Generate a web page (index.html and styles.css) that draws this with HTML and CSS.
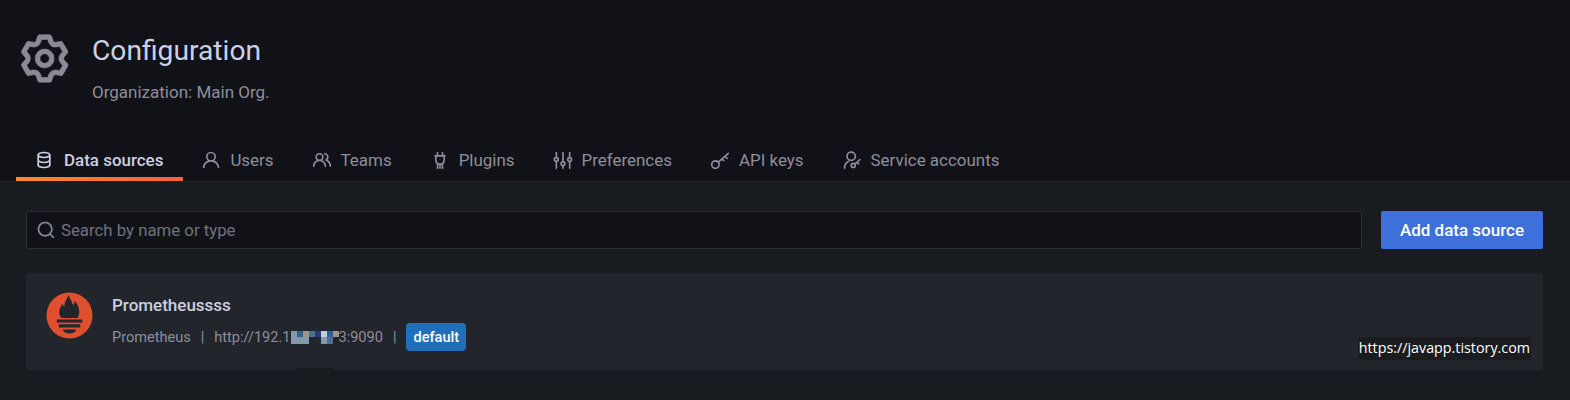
FILE: index.html
```html
<!DOCTYPE html>
<html lang="en">
<head>
<meta charset="utf-8">
<title>Configuration</title>
<link rel="stylesheet" href="styles.css">
</head>
<body>
<header class="page-header">
  <div class="title-row">
    <svg class="gear" viewBox="0 0 24 24"><path d="M19.9,12.66a1,1,0,0,1,0-1.32L21.18,9.9a1,1,0,0,0,.12-1.17l-2-3.46a1,1,0,0,0-1.07-.48l-1.88.38a1,1,0,0,1-1.15-.66l-.61-1.83A1,1,0,0,0,13.64,2h-4a1,1,0,0,0-1,.68L8.08,4.51a1,1,0,0,1-1.15.66L5,4.79A1,1,0,0,0,4,5.27L2,8.73A1,1,0,0,0,2.1,9.9l1.27,1.44a1,1,0,0,1,0,1.32L2.1,14.1A1,1,0,0,0,2,15.27l2,3.46a1,1,0,0,0,1.07.48l1.88-.38a1,1,0,0,1,1.15.66l.61,1.83a1,1,0,0,0,1,.68h4a1,1,0,0,0,.95-.68l.61-1.83a1,1,0,0,1,1.15-.66l1.88.38a1,1,0,0,0,1.07-.48l2-3.46a1,1,0,0,0-.12-1.17ZM18.41,14l.8.9-1.28,2.22-1.18-.24a3,3,0,0,0-3.45,2L12.92,20H10.36L10,18.86a3,3,0,0,0-3.45-2l-1.18.24L4.07,14.89l.8-.9a3,3,0,0,0,0-4l-.8-.9L5.35,6.89l1.18.24a3,3,0,0,0,3.45-2L10.36,4h2.56l.38,1.14a3,3,0,0,0,3.45,2l1.18-.24,1.28,2.22-.8.9A3,3,0,0,0,18.41,14ZM11.64,8a4,4,0,1,0,4,4A4,4,0,0,0,11.64,8Zm0,6a2,2,0,1,1,2-2A2,2,0,0,1,11.64,14Z"/></svg>
    <div class="title-text">
      <h1>Configuration</h1>
      <p>Organization: Main Org.</p>
    </div>
  </div>
  <nav class="tabs">
    <a class="tab active">
      <svg class="tab-icon" viewBox="0 0 24 24"><path d="M12,2C8,2,4,3.37,4,6V18c0,2.63,4,4,8,4s8-1.37,8-4V6C20,3.37,16,2,12,2Zm6,16c0,.71-2.28,2-6,2s-6-1.29-6-2V14.73A13.16,13.16,0,0,0,12,16a13.16,13.16,0,0,0,6-1.27Zm0-6c0,.71-2.28,2-6,2s-6-1.29-6-2V8.73A13.16,13.16,0,0,0,12,10a13.16,13.16,0,0,0,6-1.27ZM12,8C8.28,8,6,6.71,6,6s2.28-2,6-2,6,1.29,6,2S15.72,8,12,8Z"/></svg>
      <span>Data sources</span>
    </a>
    <a class="tab">
      <svg class="tab-icon" viewBox="0 0 24 24"><path d="M15.71,12.71a6,6,0,1,0-7.42,0,10,10,0,0,0-6.22,8.18,1,1,0,0,0,2,.22,8,8,0,0,1,15.9,0,1,1,0,0,0,1,.89h.11a1,1,0,0,0,.88-1.1A10,10,0,0,0,15.71,12.71ZM12,12a4,4,0,1,1,4-4A4,4,0,0,1,12,12Z"/></svg>
      <span>Users</span>
    </a>
    <a class="tab">
      <svg class="tab-icon" viewBox="0 0 24 24"><path d="M12.3,12.22A4.92,4.92,0,0,0,14,8.5a5,5,0,0,0-10,0,4.92,4.92,0,0,0,1.7,3.72A8,8,0,0,0,1,19.5a1,1,0,0,0,2,0,6,6,0,0,1,12,0,1,1,0,0,0,2,0A8,8,0,0,0,12.3,12.22ZM9,11.5a3,3,0,1,1,3-3A3,3,0,0,1,9,11.5Zm9.74.32A5,5,0,0,0,15,3.5a1,1,0,0,0,0,2,3,3,0,0,1,3,3,3,3,0,0,1-1.5,2.59,1,1,0,0,0-.5.84,1,1,0,0,0,.45.86l.39.26.13.07a7,7,0,0,1,4,6.38,1,1,0,0,0,2,0A9,9,0,0,0,18.74,11.82Z"/></svg>
      <span>Teams</span>
    </a>
    <a class="tab">
      <svg class="tab-icon line" viewBox="0 0 24 24"><path d="M9 3v4M15 3v4M6 7h12M7 7v5c0 3 2 5 5 5s5-2 5-5V7M12 17v5M9 22v-4M15 22v-4"/></svg>
      <span>Plugins</span>
    </a>
    <a class="tab">
      <svg class="tab-icon line" viewBox="0 0 24 24"><path d="M4 3v6M4 14v8M12 3v11M12 19v3M20 3v6M20 14v8"/><circle cx="4" cy="11.500" r="2.300"/><circle cx="12" cy="16.500" r="2.300"/><circle cx="20" cy="11.500" r="2.300"/></svg>
      <span>Preferences</span>
    </a>
    <a class="tab">
      <svg class="tab-icon line" viewBox="0 0 24 24"><circle cx="6.500" cy="17.500" r="4.500"/><path d="M10 14.500L22 4M18 7.500l2.500 2.500M14.500 10.700l2 2"/></svg>
      <span>API keys</span>
    </a>
    <a class="tab">
      <svg class="tab-icon line" viewBox="0 0 24 24"><circle cx="11" cy="7.500" r="5"/><path d="M3 22c0-4 2-7 5-8.500"/><circle cx="13.500" cy="18.500" r="2.400"/><path d="M15.500 17L21.500 11.500M18 14.700l2 2"/></svg>
      <span>Service accounts</span>
    </a>
  </nav>
</header>
<main class="content">
  <div class="toolbar">
    <div class="search">
      <svg class="search-icon" viewBox="0 0 24 24"><path d="M21.71,20.29,18,16.61A9,9,0,1,0,16.61,18l3.68,3.68a1,1,0,0,0,1.42,0A1,1,0,0,0,21.71,20.29ZM11,18a7,7,0,1,1,7-7A7,7,0,0,1,11,18Z"/></svg>
      <span>Search by name or type</span>
    </div>
    <button class="add-button">Add data source</button>
  </div>
  <section class="card">
    <svg class="logo" viewBox="0 0 48 48">
      <circle cx="24" cy="24" r="23.500" fill="#e05030"/>
      <path class="flame" d="M23.500 3c.6 4.500 3.500 6.500 4 10.500 1.200-1 1.800-2.600 1.700-4.500 3 3.300 5 7.800 4.800 11.500-.1 2.500-.8 4.400-1.800 6H15.500c-1.300-1.700-2-3.700-2-6 0-3.500 2-6.200 3.400-8.800.3 1.600 1 2.800 2 3.600C18.300 10.500 21.200 7 23.500 3Z"/>
      <path class="flame" d="M11 28h26v3.200H11ZM13 33h22v3.200H13ZM17 38.300h14c-.8 2.600-3.600 4-7 4s-6.200-1.400-7-4Z"/>
    </svg>
    <div class="card-body">
      <div class="card-name">Prometheussss</div>
      <div class="card-meta">
        <span>Prometheus</span>
        <span class="sep">|</span>
        <span class="url">http://192.1<span class="mosaic"><i class="m1"></i><i class="m2"></i><i class="m3"></i><i class="m4"></i><i class="m6"></i><i class="m5"></i><i class="m2"></i><i class="m3"></i><i class="m1"></i><i class="m1"></i><i class="m1"></i><i class="m0"></i><i class="m0"></i><i class="m1"></i><i class="m4"></i><i class="m0"></i></span>3:9090</span>
        <span class="sep">|</span>
        <span class="badge">default</span>
      </div>
    </div>
    <span class="notch"></span>
    <span class="watermark">https://javapp.tistory.com</span>
  </section>
</main>
</body>
</html>
```
FILE: styles.css
```css
* {
  box-sizing: border-box;
}

html,
body {
  margin: 0;
  height: 100%;
}

body {
  background: #181b1f;
  color: #ccccdc;
  font-family: Roboto, "Liberation Sans", sans-serif;
  font-size: 15.4px;
  overflow: hidden;
}

.page-header {
  height: 182px;
  background: #111217;
  border-bottom: 1px solid #22252b;
  display: flex;
  flex-direction: column;
  justify-content: space-between;
}

.title-row {
  display: flex;
  align-items: flex-start;
  padding: 30px 0 0 17px;
}

.gear {
  width: 57px;
  height: 57px;
  fill: #8a8a96;
  stroke: #8a8a96;
  stroke-width: 0.25;
  margin-right: 18px;
}

.title-text h1 {
  margin: 3px 0 0;
  font-size: 28.2px;
  font-weight: 400;
  line-height: 36px;
  color: #ccd0e4;
}

.title-text p {
  margin: 12px 0 0;
  font-size: 17px;
  line-height: 22px;
  color: #8e8e9c;
}

.tabs {
  display: flex;
  padding-left: 16px;
}

.tab {
  display: flex;
  align-items: center;
  height: 41px;
  padding: 0 20px 1px 18px;
  gap: 9px;
  color: #8e8e9c;
  font-size: 16.95px;
}

.tab.active {
  color: #ccd0e4;
  font-weight: 500;
  gap: 10px;
  border-bottom: 4px solid transparent;
  border-image: linear-gradient(90deg, #ff8833, #f55f3e) 1;
  padding: 2px 20px 0 18px;
}

.tab-icon {
  width: 20px;
  height: 20px;
  fill: currentColor;
}

.tab-icon.line {
  fill: none;
  stroke: currentColor;
  stroke-width: 2;
  stroke-linecap: round;
  stroke-linejoin: round;
}

.content {
  padding: 29px 27px 0 26px;
}

.toolbar {
  display: flex;
  gap: 19px;
}

.search {
  flex: 1;
  height: 38px;
  display: flex;
  align-items: center;
  gap: 5px;
  padding-left: 9px;
  background: #111217;
  border: 1px solid #2a2d33;
  border-radius: 2px;
  color: #72727e;
  font-size: 16.8px;
}

.search-icon {
  width: 20px;
  height: 20px;
  fill: #8a8a96;
}

.add-button {
  width: 162px;
  height: 38px;
  border: 0;
  border-radius: 2px;
  background: #3d71d9;
  color: #fff;
  font: 500 17px Roboto, "Liberation Sans", sans-serif;
}

.card {
  position: relative;
  display: flex;
  align-items: flex-start;
  height: 97px;
  margin-top: 24px;
  padding: 19px 20px;
  background: #22252b;
  border-radius: 2px;
}

.logo {
  width: 47px;
  height: 47px;
  margin-right: 19px;
  flex: none;
}

.flame {
  fill: #22252b;
}

.card-name {
  font-size: 17px;
  font-weight: 500;
  line-height: 24px;
  margin-top: 1px;
  color: #ccd0e4;
}

.card-meta {
  display: flex;
  align-items: center;
  margin-top: 6px;
  color: #8e8e9c;
  font-size: 14.55px;
}

.sep {
  margin: 0 10px;
}

.url {
  display: inline-flex;
  align-items: center;
}

.mosaic {
  display: inline-grid;
  grid-template-columns: repeat(8, 1fr);
  grid-template-rows: repeat(2, 1fr);
  width: 48px;
  height: 13px;
}

.mosaic .m0 { background: #22252b; }
.mosaic .m1 { background: #8199ad; }
.mosaic .m2 { background: #2f5f95; }
.mosaic .m3 { background: #a0937f; }
.mosaic .m4 { background: #4d6f92; }
.mosaic .m5 { background: #c4cfd6; }
.mosaic .m6 { background: #283c78; }

.badge {
  padding: 0 7px;
  height: 28px;
  display: inline-flex;
  align-items: center;
  background: #1f6fbb;
  border-radius: 4px;
  color: #fff;
  font-weight: 500;
}

.notch {
  position: absolute;
  left: 270px;
  bottom: -1px;
  width: 38px;
  height: 3px;
  background: #181b1f;
}

.watermark {
  position: absolute;
  right: 12px;
  top: 64px;
  padding: 0 1px;
  height: 23px;
  line-height: 21px;
  background: #1a1c20;
  color: #fff;
  font-family: "Open Sans", sans-serif;
  font-size: 14.3px;
}
```
